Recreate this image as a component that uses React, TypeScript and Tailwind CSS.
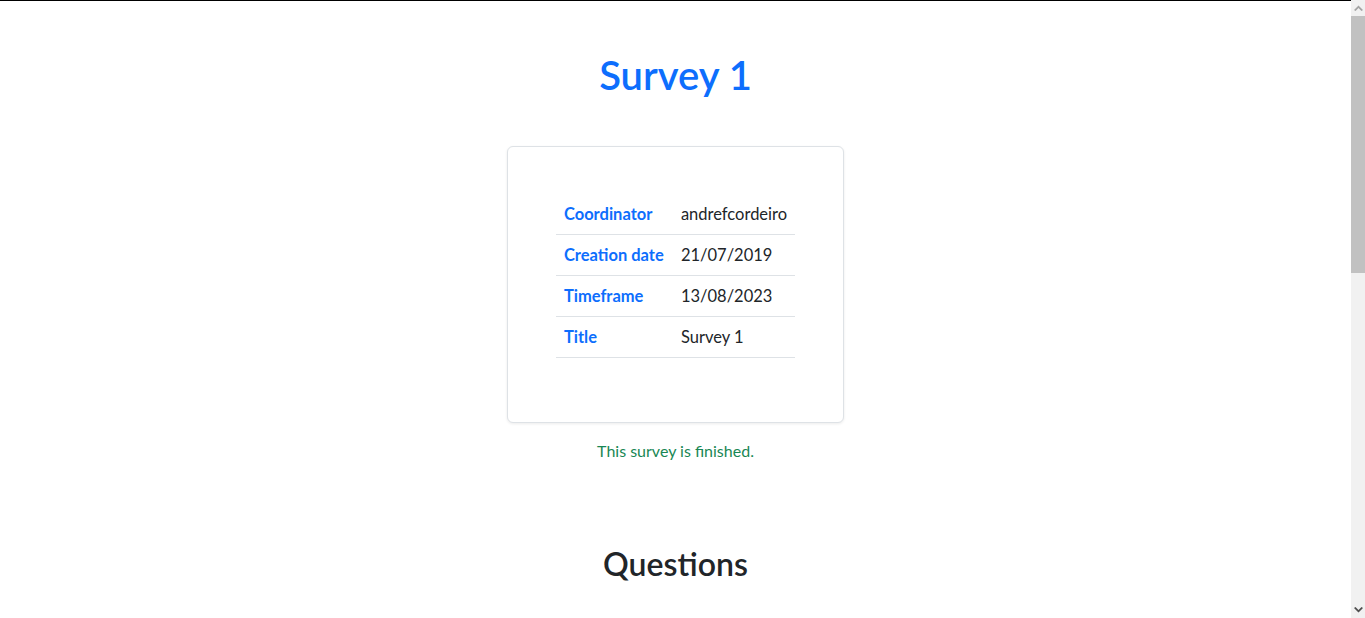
import React from 'react';

const detalhes = [
  { label: 'Coordinator', value: 'andrefcordeiro' },
  { label: 'Creation date', value: '21/07/2019' },
  { label: 'Timeframe', value: '13/08/2023' },
  { label: 'Title', value: 'Survey 1' },
];

// barra de rolagem desenhada à direita, como no print
const BarraRolagem = () => (
  <div className="w-[14px] shrink-0 bg-[#f1f1f1] flex flex-col">
    <div className="h-[16px] flex items-center justify-center">
      <svg width="9" height="6" viewBox="0 0 9 6">
        <path d="M0 5 L4.5 0.5 L9 5 L7.5 6 L4.5 3 L1.5 6 Z" fill="#a3a3a3" />
      </svg>
    </div>
    <div className="h-[257px] bg-[#c1c1c1]" />
    <div className="flex-1" />
    <div className="h-[16px] flex items-center justify-center">
      <svg width="9" height="6" viewBox="0 0 9 6">
        <path d="M0 1 L4.5 5.5 L9 1 L7.5 0 L4.5 3 L1.5 0 Z" fill="#505050" />
      </svg>
    </div>
  </div>
);

export default function App() {
  return (
    <div
      className="h-[618px] flex overflow-hidden bg-white text-[#212529]"
      style={{ fontFamily: 'Lato, "Noto Sans", "Liberation Sans", sans-serif' }}
    >
      <div className="flex-1 border-t border-black flex flex-col items-center">
        <h1 className="mt-[50px] text-[40px] leading-[48px] font-semibold text-[#0d6efd]">Survey 1</h1>

        <div className="mt-[47px] w-fit rounded-md border border-[#dee2e6] bg-white px-12 pt-[47px] pb-[64px] shadow-[0_1px_3px_rgba(0,0,0,0.08)]">
          <table className="border-collapse text-[16.5px]">
            <tbody>
              {detalhes.map((d) => (
                <tr key={d.label} className="border-b border-[#dee2e6]">
                  <td className="w-[117px] px-2 py-2 leading-6 font-bold text-[#0d6efd] whitespace-nowrap">{d.label}</td>
                  <td className="w-[120px] px-2 py-2 leading-6 whitespace-nowrap">{d.value}</td>
                </tr>
              ))}
            </tbody>
          </table>
        </div>

        <p className="mt-4 text-base leading-6 text-[#198754]">This survey is finished.</p>

        <h2 className="mt-[82px] text-[32px] leading-[38px] font-semibold">Questions</h2>
      </div>
      <BarraRolagem />
    </div>
  );
}
